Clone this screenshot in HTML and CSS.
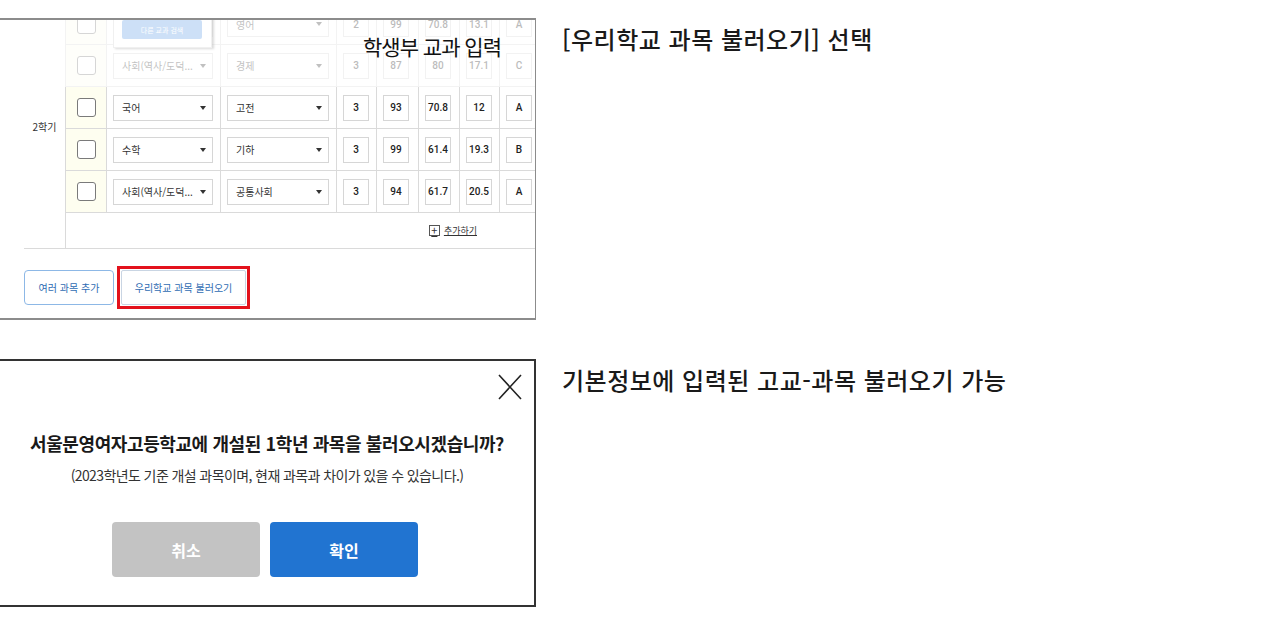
FILE: index.html
```html
<!DOCTYPE html>
<html lang="ko">
<head>
    <meta charset="UTF-8">
    <meta name="viewport" content="width=device-width, initial-scale=1.0">
    <title>우리학교 과목 불러오기</title>
    <link rel="stylesheet" href="styles.css">
</head>
<body>
    <div class="page">
        <!-- 학생부 교과 입력 캡처 -->
        <div class="shot sheet-shot">
            <div class="sheet">
                <div class="term">2학기</div>
                <div class="rows">
                    <div class="row dim">
                        <div class="cell check"><span class="box"></span></div>
                        <div class="cell pick">
                            <div class="select"><span>국어</span><i class="caret"></i></div>
                            <div class="popup"><span class="popup-btn">다른 교과 검색</span></div>
                        </div>
                        <div class="cell pick"><div class="select"><span>영어</span><i class="caret"></i></div></div>
                        <div class="cell num"><span>2</span></div>
                        <div class="cell num"><span>99</span></div>
                        <div class="cell num"><span>70.8</span></div>
                        <div class="cell num"><span>13.1</span></div>
                        <div class="cell num"><span>A</span></div>
                    </div>
                    <div class="row dim">
                        <div class="cell check"><span class="box"></span></div>
                        <div class="cell pick"><div class="select"><span>사회(역사/도덕...</span><i class="caret"></i></div></div>
                        <div class="cell pick"><div class="select"><span>경제</span><i class="caret"></i></div></div>
                        <div class="cell num"><span>3</span></div>
                        <div class="cell num"><span>87</span></div>
                        <div class="cell num"><span>80</span></div>
                        <div class="cell num"><span>17.1</span></div>
                        <div class="cell num"><span>C</span></div>
                    </div>
                    <div class="row">
                        <div class="cell check"><span class="box"></span></div>
                        <div class="cell pick"><div class="select"><span>국어</span><i class="caret"></i></div></div>
                        <div class="cell pick"><div class="select"><span>고전</span><i class="caret"></i></div></div>
                        <div class="cell num"><span>3</span></div>
                        <div class="cell num"><span>93</span></div>
                        <div class="cell num"><span>70.8</span></div>
                        <div class="cell num"><span>12</span></div>
                        <div class="cell num"><span>A</span></div>
                    </div>
                    <div class="row">
                        <div class="cell check"><span class="box"></span></div>
                        <div class="cell pick"><div class="select"><span>수학</span><i class="caret"></i></div></div>
                        <div class="cell pick"><div class="select"><span>기하</span><i class="caret"></i></div></div>
                        <div class="cell num"><span>3</span></div>
                        <div class="cell num"><span>99</span></div>
                        <div class="cell num"><span>61.4</span></div>
                        <div class="cell num"><span>19.3</span></div>
                        <div class="cell num"><span>B</span></div>
                    </div>
                    <div class="row">
                        <div class="cell check"><span class="box"></span></div>
                        <div class="cell pick"><div class="select"><span>사회(역사/도덕...</span><i class="caret"></i></div></div>
                        <div class="cell pick"><div class="select"><span>공통사회</span><i class="caret"></i></div></div>
                        <div class="cell num"><span>3</span></div>
                        <div class="cell num"><span>94</span></div>
                        <div class="cell num"><span>61.7</span></div>
                        <div class="cell num"><span>20.5</span></div>
                        <div class="cell num"><span>A</span></div>
                    </div>
                    <div class="add-row">
                        <a class="add-link"><span class="plus">+</span>추가하기</a>
                    </div>
                </div>
            </div>

            <div class="actions">
                <button class="btn-line">여러 과목 추가</button>
                <span class="mark"><button class="btn-line btn-load">우리학교 과목 불러오기</button></span>
            </div>

            <div class="stamp">학생부 교과 입력</div>
        </div>
        <p class="note">[우리학교 과목 불러오기] 선택</p>

        <!-- 불러오기 확인 팝업 캡처 -->
        <div class="shot modal">
            <div class="modal-top">
                <svg class="close" width="24" height="26" viewBox="0 0 24 26">
                    <path d="M1 1 L23 25 M23 1 L1 25" stroke="#222" stroke-width="1.6" fill="none"/>
                </svg>
            </div>
            <div class="modal-title">서울문영여자고등학교에 개설된 1학년 과목을 불러오시겠습니까?</div>
            <div class="modal-sub">(2023학년도 기준 개설 과목이며, 현재 과목과 차이가 있을 수 있습니다.)</div>
            <div class="modal-buttons">
                <button class="btn-big btn-cancel">취소</button>
                <button class="btn-big btn-ok">확인</button>
            </div>
        </div>
        <p class="note">기본정보에 입력된 고교-과목 불러오기 가능</p>
    </div>
</body>
</html>
```

FILE: styles.css
```css
body {
    margin: 0;
    background: #FFFFFF;
    font-family: "Noto Sans CJK KR", "Noto Sans", sans-serif;
    color: #222222;
}

.page {
    display: grid;
    grid-template-columns: 536px 1fr;
    column-gap: 26px;
    row-gap: 39px;
    padding-top: 18px;
}

.shot {
    box-sizing: border-box;
    background: #FFFFFF;
    overflow: hidden;
}

.sheet-shot {
    position: relative;
    height: 302px;
    border-top: 2px solid #8C8C8C;
    border-right: 1px solid #8C8C8C;
    border-bottom: 2px solid #8C8C8C;
}

.note {
    margin: 0;
    padding-top: 6px;
    font-size: 24px;
    line-height: 29px;
    font-weight: 500;
    color: #1A1A1A;
    letter-spacing: 0.5px;
}

/* 교과 표 */
.sheet {
    display: flex;
    margin: -16px 0 0 24px;
    border-bottom: 1px solid #DADADA;
}

.term {
    width: 41px;
    display: flex;
    align-items: center;
    justify-content: center;
    font-size: 10px;
    color: #333333;
    box-sizing: border-box;
}

.rows {
    flex: 1;
    display: flex;
    flex-direction: column;
}

.row {
    display: grid;
    grid-template-columns: 41px 114px 116px 40px 42px 41px 40px 1fr;
    height: 42px;
    box-sizing: border-box;
    border-bottom: 1px solid #DADADA;
}

.row.dim {
    opacity: 0.3;
}

.row.dim:first-child {
    height: 41px;
}

.cell {
    display: flex;
    align-items: center;
    border-left: 1px solid #DADADA;
    position: relative;
}

.check {
    justify-content: center;
    background: #FEFEF0;
}

.box {
    width: 19px;
    height: 19px;
    box-sizing: border-box;
    border: 1.5px solid #7A7A7A;
    border-radius: 3px;
    background: #FFFFFF;
}

.pick {
    padding: 0 7px 0 6px;
}

.select {
    flex: 1;
    height: 26px;
    box-sizing: border-box;
    border: 1px solid #D6D6D6;
    display: flex;
    align-items: center;
    justify-content: space-between;
    padding: 0 6px 0 8px;
    font-size: 10px;
    color: #333333;
    white-space: nowrap;
}

.caret {
    width: 0;
    height: 0;
    border-left: 3px solid transparent;
    border-right: 3px solid transparent;
    border-top: 4px solid #333333;
}

.num {
    padding-left: 6px;
}

.num span {
    width: 26px;
    height: 26px;
    box-sizing: border-box;
    border: 1px solid #D6D6D6;
    display: flex;
    align-items: center;
    justify-content: center;
    font-family: Roboto, "Noto Sans CJK KR", sans-serif;
    font-size: 10px;
    font-weight: 500;
    color: #222222;
}

.popup {
    position: absolute;
    left: 6px;
    top: -12px;
    width: 99px;
    height: 56px;
    box-sizing: border-box;
    background: #FFFFFF;
    border: 1px solid #CFCFCF;
    box-shadow: 2px 1px 2px rgba(0, 0, 0, 0.45);
    z-index: 2;
}

.popup-btn {
    position: absolute;
    left: 8px;
    top: 27px;
    width: 80px;
    height: 19px;
    border-radius: 2px;
    background: #5C9BE6;
    color: #FFFFFF;
    font-size: 7px;
    display: flex;
    align-items: center;
    justify-content: center;
}

.add-row {
    height: 35px;
    border-left: 1px solid #DADADA;
    display: flex;
    align-items: center;
    justify-content: flex-end;
    padding-right: 58px;
}

.add-link {
    display: flex;
    align-items: center;
    gap: 4px;
    font-size: 9px;
    color: #333333;
    text-decoration: underline;
}

.plus {
    width: 11px;
    height: 11px;
    box-sizing: border-box;
    border: 1px solid #555555;
    display: flex;
    align-items: center;
    justify-content: center;
    font-size: 11px;
    line-height: 1;
    text-decoration: none;
}

.actions {
    display: flex;
    align-items: center;
    gap: 3px;
    margin: 17px 0 0 24px;
}

.btn-line {
    height: 35px;
    padding: 0;
    background: #FFFFFF;
    border: 1px solid #8DB8E6;
    border-radius: 4px;
    font-family: inherit;
    font-size: 10px;
    color: #2F6CB3;
    width: 90px;
}

.mark {
    display: flex;
    padding: 1px;
    border: 3px solid #E3121C;
}

.btn-load {
    width: 125px;
    border-color: #C9D5E3;
    border-radius: 2px;
}

.stamp {
    position: absolute;
    left: 363px;
    top: 12px;
    font-size: 21px;
    line-height: 28px;
    letter-spacing: -1px;
    color: #111111;
}

/* 확인 팝업 */
.modal {
    height: 248px;
    border-top: 2px solid #333333;
    border-right: 2px solid #333333;
    border-bottom: 2px solid #333333;
    display: flex;
    flex-direction: column;
    align-items: center;
    padding-top: 13px;
}

.modal-top {
    align-self: stretch;
    display: flex;
    justify-content: flex-end;
    padding-right: 12px;
}

.close {
    display: block;
}

.modal-title {
    margin-top: 30px;
    font-size: 18px;
    line-height: 26px;
    font-weight: 700;
    letter-spacing: -0.4px;
    color: #1A1A1A;
}

.modal-sub {
    margin-top: 9px;
    font-size: 14px;
    line-height: 20px;
    letter-spacing: -0.6px;
    color: #333333;
}

.modal-buttons {
    display: flex;
    gap: 10px;
    margin-top: 37px;
    margin-right: 4px;
}

.btn-big {
    width: 148px;
    height: 55px;
    border: none;
    border-radius: 4px;
    font-family: inherit;
    font-size: 16px;
    font-weight: 700;
    color: #FFFFFF;
}

.btn-cancel {
    background: #C3C3C3;
}

.btn-ok {
    background: #2174D1;
}
```
